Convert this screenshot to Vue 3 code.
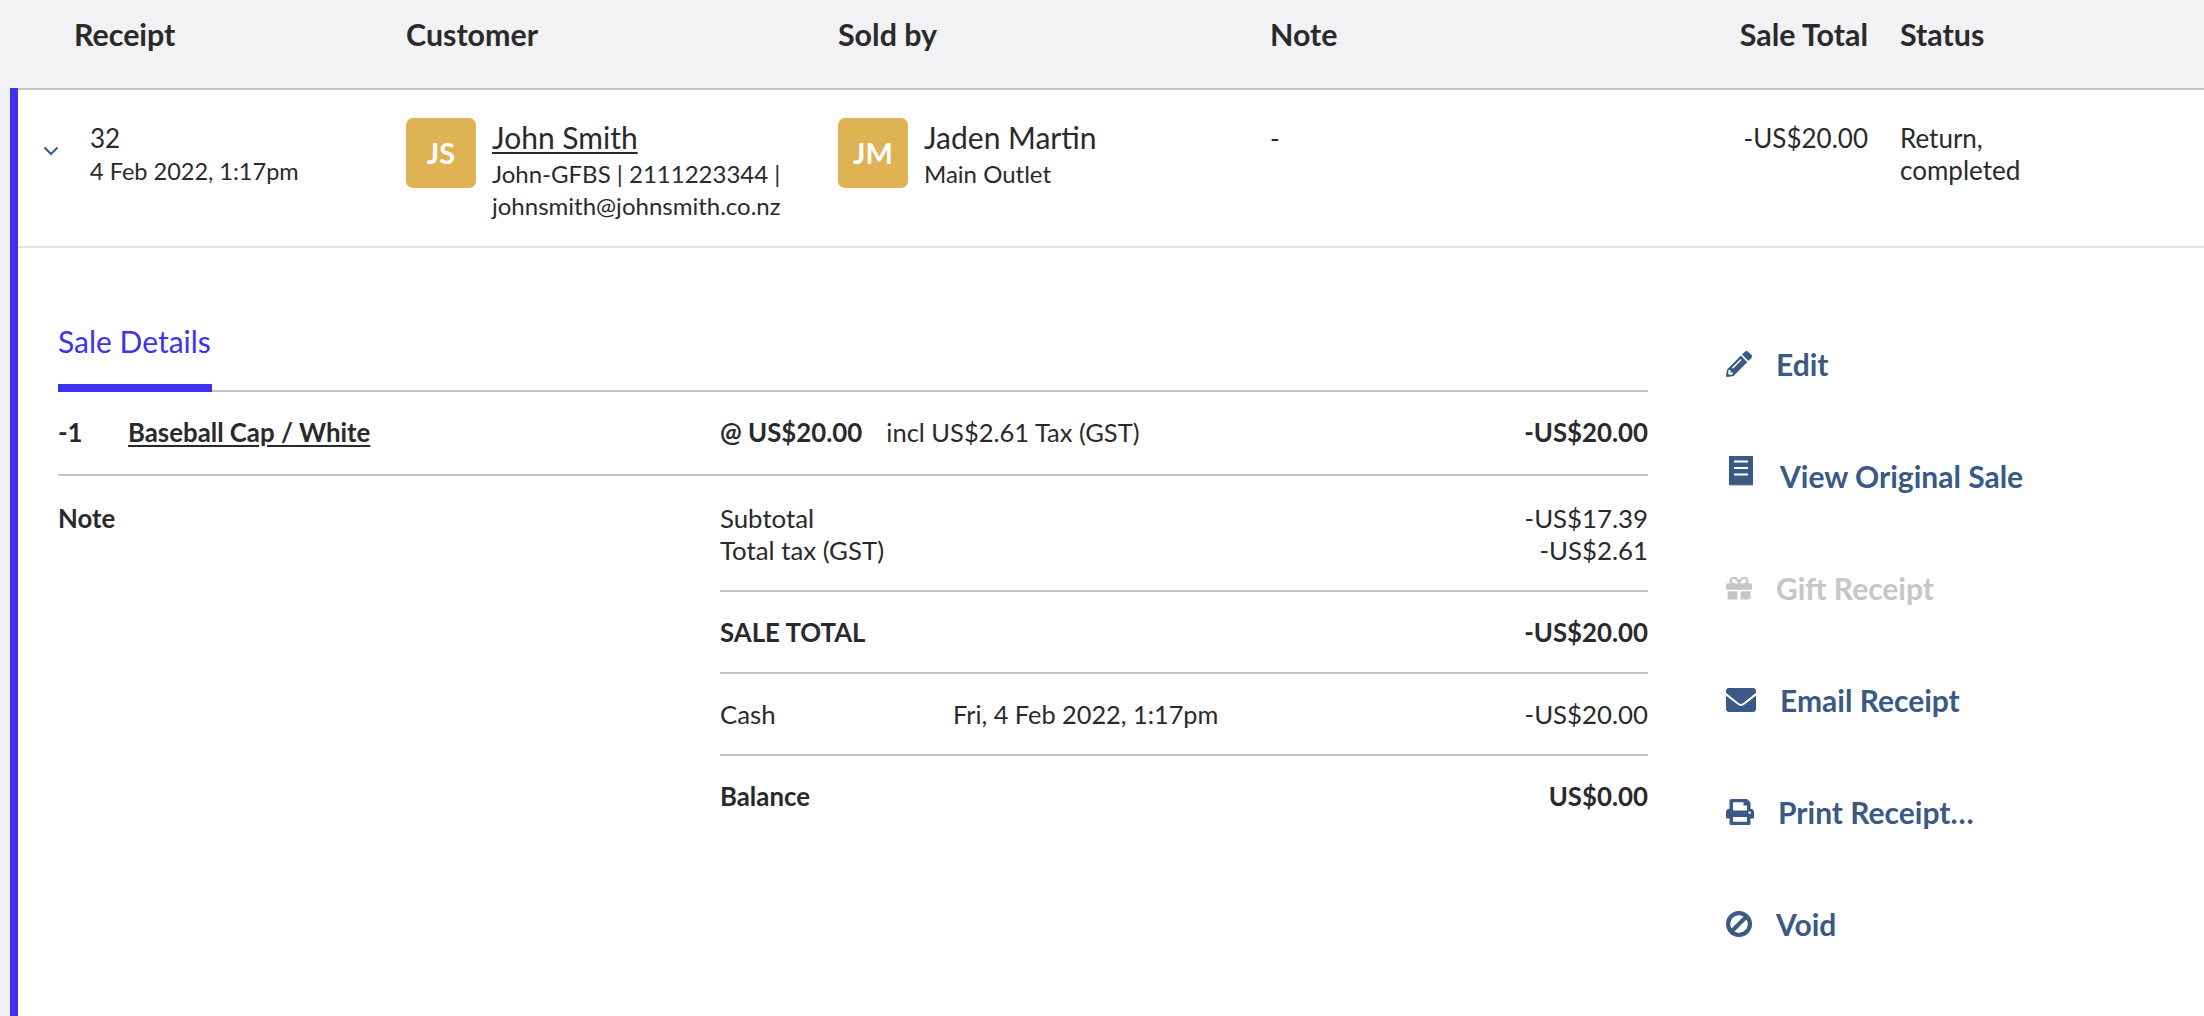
<script setup>
const actions = [
  { label: 'Edit', w: 26, h: 26, cls: '', sw: 0, vb: '0 0 512 512', d: 'M497.9 142.1l-46.1 46.1c-4.7 4.7-12.3 4.7-17 0l-111-111c-4.7-4.7-4.7-12.3 0-17l46.1-46.1c18.7-18.7 49.1-18.7 67.9 0l60.1 60.1c18.8 18.7 18.8 49.1 0 67.9zM284.2 99.8L21.6 362.4.4 483.9c-2.9 16.4 11.4 30.6 27.8 27.8l121.5-21.3 262.6-262.6c4.7-4.7 4.7-12.3 0-17l-111-111c-4.8-4.7-12.4-4.7-17.1 0zM124.1 339.9c-5.5-5.5-5.5-14.3 0-19.8l154-154c5.5-5.5 14.3-5.5 19.8 0s5.5 14.3 0 19.8l-154 154c-5.5 5.5-14.3 5.5-19.8 0zM88 424h48v36.3l-64.5 11.3-31.1-31.1L51.7 376H88v48z' },
  { label: 'View Original Sale', w: 24, h: 30, cls: 'receipt', sw: 0, vb: '0 0 24 30', d: 'M0 0H24V28.5L23 30 22 28.5 21 30 20 28.5 19 30 18 28.5 17 30 16 28.5 15 30 14 28.5 13 30 12 28.5 11 30 10 28.5 9 30 8 28.5 7 30 6 28.5 5 30 4 28.5 3 30 2 28.5 1 30 0 28.5ZM5 4.5V6.5H19V4.5ZM5 11V13H19V11ZM5 17.5V19.5H19V17.5Z' },
  { label: 'Gift Receipt', w: 26, h: 26, cls: 'off', sw: 0, vb: '0 0 512 512', d: 'M32 448c0 17.7 14.3 32 32 32h160V320H32v128zm256 32h160c17.7 0 32-14.3 32-32V320H288v160zm192-320h-42.1c6.2-12.1 10.1-25.5 10.1-40 0-48.5-39.5-88-88-88-41.6 0-68.5 21.3-103 68.3-34.5-47-61.4-68.3-103-68.3-48.5 0-88 39.5-88 88 0 14.5 3.8 27.9 10.1 40H32c-17.7 0-32 14.3-32 32v80c0 8.8 7.2 16 16 16h480c8.8 0 16-7.2 16-16v-80c0-17.7-14.3-32-32-32zm-326.1 0c-22.1 0-40-17.9-40-40s17.9-40 40-40c19.9 0 34.6 3.3 86.1 80h-86.1zm206.1 0h-86.1c51.4-76.5 65.7-80 86.1-80 22.1 0 40 17.9 40 40s-17.9 40-40 40z' },
  { label: 'Email Receipt', w: 30, h: 32, cls: '', sw: 0, vb: '0 0 512 512', d: 'M502.3 190.8c3.9-3.1 9.7-.2 9.7 4.7V400c0 26.5-21.5 48-48 48H48c-26.5 0-48-21.5-48-48V195.6c0-5 5.7-7.8 9.7-4.7 22.4 17.4 52.1 39.5 154.1 113.6 21.1 15.4 56.7 47.8 92.2 47.6 35.7.3 72-32.8 92.3-47.6 102-74.1 131.6-96.3 154-113.7zM256 320c23.2.4 56.6-29.2 73.4-41.4 132.7-96.3 142.8-104.7 173.4-128.7 5.8-4.5 9.2-11.5 9.2-18.9v-19c0-26.5-21.5-48-48-48H48C21.5 64 0 85.5 0 112v19c0 7.4 3.4 14.3 9.2 18.9 30.6 23.9 40.7 32.4 173.4 128.7 16.8 12.2 50.2 41.8 73.4 41.4z' },
  { label: 'Print Receipt…', w: 28, h: 26, cls: '', sw: 0, vb: '0 0 512 512', d: 'M448 192V77.25c0-8.49-3.37-16.62-9.37-22.63L393.37 9.37c-6-6-14.14-9.37-22.63-9.37H96C78.33 0 64 14.33 64 32v160c-35.35 0-64 28.65-64 64v112c0 8.84 7.16 16 16 16h48v96c0 17.67 14.33 32 32 32h320c17.67 0 32-14.33 32-32v-96h48c8.84 0 16-7.16 16-16V256c0-35.35-28.65-64-64-64zm-64 256H128v-96h256v96zm0-224H128V64h192v48c0 8.84 7.16 16 16 16h48v96zm48 72c-13.25 0-24-10.75-24-24 0-13.26 10.75-24 24-24s24 10.74 24 24c0 13.25-10.75 24-24 24z' },
  { label: 'Void', w: 26, h: 26, cls: '', sw: 20, tf: 'translate(512 0) scale(-1 1)', vb: '-2 -2 516 516', d: 'M256 8C119.034 8 8 119.033 8 256s111.034 248 248 248 248-111.034 248-248S392.967 8 256 8zm130.108 117.892c65.448 65.448 70 165.481 20.677 235.637L150.47 105.216c70.204-49.356 170.226-44.735 235.638 20.676zM125.892 386.108c-65.448-65.448-70-165.481-20.677-235.637L361.53 406.784c-70.203 49.356-170.226 44.736-235.638-20.676z' }
]
</script>

<template>
  <div class="page">
    <header class="head">
      <div class="cell">Receipt</div>
      <div class="cell">Customer</div>
      <div class="cell">Sold by</div>
      <div class="cell">Note</div>
      <div class="cell total">Sale Total</div>
      <div class="cell">Status</div>
    </header>

    <div class="strip">
      <main class="panel">
        <section class="row">
          <div class="receipt-cell">
            <svg class="chev" viewBox="0 0 16 10"><path d="M1.5 1.5 8 8l6.5-6.5" fill="none" stroke="#3a5a85" stroke-width="2" /></svg>
            <div>
              <div class="rnum">32</div>
              <div class="date">4 Feb 2022, 1:17pm</div>
            </div>
          </div>
          <div class="person">
            <div class="avatar">JS</div>
            <div>
              <a class="name link">John Smith</a>
              <div class="small sub">John-GFBS | 2111223344 |<br />johnsmith@johnsmith.co.nz</div>
            </div>
          </div>
          <div class="person">
            <div class="avatar">JM</div>
            <div>
              <div class="name">Jaden Martin</div>
              <div class="small sub">Main Outlet</div>
            </div>
          </div>
          <div class="note">-</div>
          <div class="sum">-US$20.00</div>
          <div class="status">Return,<br />completed</div>
        </section>

        <section class="details">
          <div class="sale">
            <div class="tabs"><div class="tab">Sale Details</div></div>

            <div class="line-item">
              <div class="item-left">
                <b class="qty">-1</b>
                <a class="item-name">Baseball Cap / White</a>
              </div>
              <div class="item-mid"><b>@ US$20.00</b><span class="tax">incl US$2.61 Tax (GST)</span></div>
              <b class="amount">-US$20.00</b>
            </div>

            <div class="summary">
              <b class="note-label">Note</b>
              <div class="totals">
                <div class="block">
                  <div class="pair"><span>Subtotal</span><span>-US$17.39</span></div>
                  <div class="pair"><span>Total tax (GST)</span><span>-US$2.61</span></div>
                </div>
                <div class="block strong">
                  <div class="pair"><span>SALE TOTAL</span><span>-US$20.00</span></div>
                </div>
                <div class="block">
                  <div class="pair"><span class="pay">Cash</span><span class="pay-date">Fri, 4 Feb 2022, 1:17pm</span><span>-US$20.00</span></div>
                </div>
                <div class="block strong">
                  <div class="pair"><span>Balance</span><span>US$0.00</span></div>
                </div>
              </div>
            </div>
          </div>

          <aside class="actions">
            <a v-for="a in actions" :key="a.label" class="action" :class="a.cls">
              <svg :width="a.w" :height="a.h" :viewBox="a.vb" preserveAspectRatio="none"><path :d="a.d" :transform="a.tf" fill="currentColor" fill-rule="evenodd" stroke="currentColor" :stroke-width="a.sw" /></svg>
              <span>{{ a.label }}</span>
            </a>
          </aside>
        </section>
      </main>
    </div>
  </div>
</template>

<style>
html, body { margin: 0; background: #fff; }
</style>

<style scoped>
.page {
  width: 2204px;
  height: 1016px;
  overflow: hidden;
  background: #f2f1f4;
  color: #2a2a2d;
  font-family: Lato, "Liberation Sans", sans-serif;
  font-size: 26px;
  line-height: 32px;
}
.head {
  display: grid;
  grid-template-columns: 332px 432px 432px 418px 180px 1fr;
  height: 88px;
  box-sizing: border-box;
  padding: 18px 0 0 74px;
  font-size: 30.4px;
  font-weight: 700;
}
.head .total { text-align: right; }
.head .cell:last-child { padding-left: 32px; }
.strip {
  padding-left: 10px;
  background: linear-gradient(90deg, #f0f0f1, #dedde0);
}
.panel {
  border-left: 8px solid #3f32ef;
  background: #fff;
  height: 928px;
}
.row {
  display: grid;
  grid-template-columns: 388px 432px 432px 418px 180px 1fr;
  height: 160px;
  box-sizing: border-box;
  padding-top: 28px;
  border-top: 2px solid #c6c5c8;
  border-bottom: 2px solid #e3e3e5;
}
.receipt-cell { display: flex; padding-left: 25px; }
.chev { width: 16px; height: 10px; margin-top: 28px; }
.receipt-cell > div { margin-left: 31px; margin-top: 4px; }
.rnum { font-size: 26px; }
.date { font-size: 23.5px; line-height: 34px; }
.small { font-size: 24px; line-height: 32px; }
.person { display: flex; gap: 16px; }
.avatar {
  width: 70px;
  height: 70px;
  flex: none;
  border-radius: 7px;
  background: #dfb254;
  color: #fff;
  font-size: 29px;
  font-weight: 700;
  display: flex;
  align-items: center;
  justify-content: center;
}
.name { font-size: 30px; line-height: 38px; display: block; }
.link { text-decoration: underline; text-underline-offset: 3px; text-decoration-thickness: 2px; }
.sub { margin-top: 2px; }
.note { padding-top: 4px; }
.sum { padding-top: 4px; text-align: right; }
.status { padding: 4px 0 0 32px; }

.details {
  display: flex;
  padding: 50px 0 0 40px;
}
.sale { width: 1590px; flex: none; font-size: 25.8px; }
.tabs {
  height: 94px;
  box-sizing: border-box;
  border-bottom: 2px solid #c6c5c8;
}
.tab {
  display: inline-block;
  height: 94px;
  box-sizing: border-box;
  padding: 25px 0 0;
  width: 154px;
  border-bottom: 8px solid #3f32ef;
  color: #3f32ef;
  font-size: 30px;
  line-height: 36px;
  white-space: nowrap;
}
.line-item {
  display: flex;
  align-items: center;
  height: 84px;
  box-sizing: border-box;
  border-bottom: 2px solid #c6c5c8;
  padding-bottom: 2px;
}
.item-left { width: 662px; display: flex; }
.qty { width: 70px; }
.item-name { font-weight: 700; text-decoration: underline; text-underline-offset: 3px; }
.item-mid { flex: 1; }
.tax { margin-left: 24px; font-size: 25.5px; }
.summary { display: flex; padding-top: 26px; }
.note-label { width: 662px; flex: none; }
.totals { flex: 1; }
.pair { display: flex; justify-content: space-between; }
.pay { width: 233px; flex: none; }
.pay-date { flex: 1; font-size: 25.3px; }
.block { padding-bottom: 24px; border-bottom: 2px solid #c6c5c8; margin-bottom: 24px; }
.block:last-child { border-bottom: 0; }
.strong { font-weight: 700; }
.actions {
  flex: 1;
  padding: 10px 0 0 78px;
  display: flex;
  flex-direction: column;
}
.action {
  display: flex;
  align-items: center;
  gap: 24px;
  height: 112px;
  color: #3a5a85;
  font-size: 30px;
  font-weight: 700;
}
.action.off { color: #c6c6c6; }
.action.receipt { gap: 27px; }
.action.receipt svg { margin-left: 3px; margin-top: -10px; }
</style>
